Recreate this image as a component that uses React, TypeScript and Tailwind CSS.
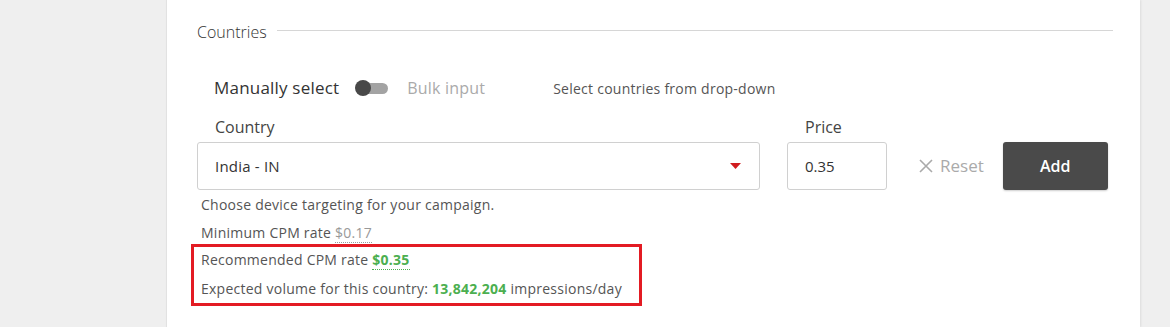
import { useState } from 'react';

export default function App() {
  const [price, setPrice] = useState('0.35');
  const [bulk, setBulk] = useState(false);

  return (
    <div className="w-[1170px] h-[327px] bg-[#efefef] flex overflow-hidden" style={{ fontFamily: '"Open Sans", "Noto Sans", sans-serif' }}>
      <div className="ml-[166px] w-[974px] bg-white border-l border-[#e2e2e2] shadow-[1px_0_2px_rgba(0,0,0,0.08)] pl-[30px] pr-[27px]">
        <div className="flex items-center gap-[10px] pt-[20px]">
          <h3 className="text-[16px] font-light text-[#333] leading-[24px]">Countries</h3>
          <div className="flex-1 h-px bg-[#d6d6d6] mt-[-4px]" />
        </div>

        <div className="flex items-center mt-[32px] pl-[17px] h-[24px]">
          <span className="text-[17px] tracking-[0.2px] text-[#333]">Manually select</span>
          <button onClick={() => setBulk(!bulk)} className="relative ml-[16px] w-[33px] h-[16px] flex items-center">
            <span className="absolute left-[6px] right-0 h-[11px] rounded-full bg-[#a3a3a3]" />
            <span className="absolute left-0 w-[16px] h-[16px] rounded-full bg-[#484848]" />
          </button>
          <span className="ml-[19px] text-[16px] tracking-[0.2px] text-[#aaa]">Bulk input</span>
          <span className="ml-[68px] text-[14px] tracking-[0.25px] text-[#555] mt-[1px]">Select countries from drop-down</span>
        </div>

        <div className="flex items-end mt-[17px]">
          <div className="w-[563px]">
            <label className="block pl-[18px] text-[16px] text-[#444] leading-[20px] mb-[5px]">Country</label>
            <div className="h-[48px] border border-[#d0d0d0] rounded-[3px] flex items-center justify-between pl-[17px] pr-[17px]">
              <span className="text-[15px] tracking-[0.2px] text-[#333]">India - IN</span>
              <svg width="11" height="6" viewBox="0 0 11 6" className="mr-[1px]">
                <path d="M0 0h11L5.5 6z" fill="#d01c1f" />
              </svg>
            </div>
          </div>
          <div className="ml-[27px] w-[100px]">
            <label className="block pl-[18px] text-[16px] text-[#444] leading-[20px] mb-[5px]">Price</label>
            <input
              value={price}
              onChange={e => setPrice(e.target.value)}
              className="w-full h-[48px] border border-[#d0d0d0] rounded-[3px] pl-[17px] text-[15px] text-[#333] outline-none"
            />
          </div>
          <button className="ml-[32px] h-[48px] flex items-center gap-[7px] text-[17px] text-[#aaa]">
            <svg width="14" height="14" viewBox="0 0 14 14">
              <path d="M1 1l12 12M13 1L1 13" stroke="#aaa" strokeWidth="1.6" />
            </svg>
            Reset
          </button>
          <button className="ml-[19px] w-[105px] h-[48px] bg-[#4a4a4a] rounded-[3px] text-white text-[16px] font-semibold shadow-[0_1px_2px_rgba(0,0,0,0.2)]">
            Add
          </button>
        </div>

        <div className="pl-[4px] mt-[6px] text-[14px] tracking-[0.25px] text-[#555] leading-[18px]">
          <p>Choose device targeting for your campaign.</p>
          <p className="mt-[10px]">
            Minimum CPM rate <span className="text-[#999] border-b border-dotted border-[#999]">$0.17</span>
          </p>
        </div>
        <div className="mt-[2px] ml-[-6px] w-[451px] border-[3px] border-[#e31b23] pl-[7px] pt-[4px] pb-[5px] text-[14px] tracking-[0.25px] text-[#555] leading-[18px]">
          <p>
            Recommended CPM rate{' '}
            <span className="font-bold text-[#4caf50] border-b border-dotted border-[#4caf50]">$0.35</span>
          </p>
          <p className="mt-[11px]">
            Expected volume for this country: <span className="font-bold text-[#4caf50]">13,842,204</span> impressions/day
          </p>
        </div>
      </div>
    </div>
  );
}
